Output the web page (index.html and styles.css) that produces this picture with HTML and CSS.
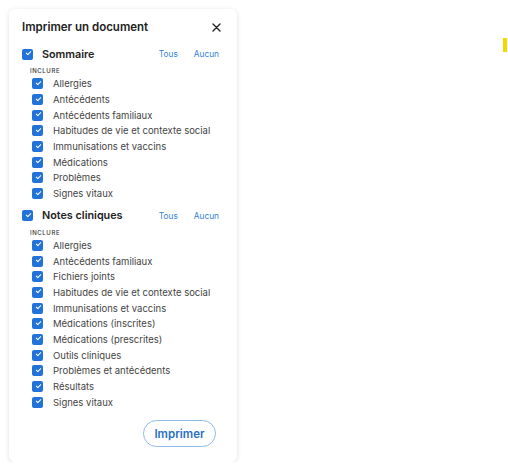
FILE: index.html
```html
<!DOCTYPE html>
<html>
<head>
  <title>Imprimer un document</title>
  <link rel="stylesheet" href="styles.css">
</head>
<body>
  <div class="page">
    <div class="card">
      <div class="card-header">
        <h1>Imprimer un document</h1>
        <button class="close" aria-label="Fermer">
          <svg width="9" height="9" viewBox="0 0 9 9"><path d="M1 1L8 8M8 1L1 8" stroke="#222" stroke-width="1.4" stroke-linecap="round"/></svg>
        </button>
      </div>

      <div class="section">
        <div class="section-head">
          <span class="box"></span>
          <span class="section-title">Sommaire</span>
          <span class="links"><a>Tous</a><a>Aucun</a></span>
        </div>
        <div class="include">Inclure</div>
        <ul class="items">
          <li><span class="box"></span>Allergies</li>
          <li><span class="box"></span>Antécédents</li>
          <li><span class="box"></span>Antécédents familiaux</li>
          <li><span class="box"></span>Habitudes de vie et contexte social</li>
          <li><span class="box"></span>Immunisations et vaccins</li>
          <li><span class="box"></span>Médications</li>
          <li><span class="box"></span>Problèmes</li>
          <li><span class="box"></span>Signes vitaux</li>
        </ul>
      </div>

      <div class="section">
        <div class="section-head">
          <span class="box"></span>
          <span class="section-title">Notes cliniques</span>
          <span class="links"><a>Tous</a><a>Aucun</a></span>
        </div>
        <div class="include">Inclure</div>
        <ul class="items">
          <li><span class="box"></span>Allergies</li>
          <li><span class="box"></span>Antécédents familiaux</li>
          <li><span class="box"></span>Fichiers joints</li>
          <li><span class="box"></span>Habitudes de vie et contexte social</li>
          <li><span class="box"></span>Immunisations et vaccins</li>
          <li><span class="box"></span>Médications (inscrites)</li>
          <li><span class="box"></span>Médications (prescrites)</li>
          <li><span class="box"></span>Outils cliniques</li>
          <li><span class="box"></span>Problèmes et antécédents</li>
          <li><span class="box"></span>Résultats</li>
          <li><span class="box"></span>Signes vitaux</li>
        </ul>
      </div>

      <div class="actions">
        <button class="print">Imprimer</button>
      </div>
    </div>

    <div class="marker"></div>
  </div>
</body>
</html>
```

FILE: styles.css
```css
body {
  margin: 0;
  font-family: Inter, "Noto Sans", sans-serif;
  background-color: #ffffff;
  color: #333333;
}

.page {
  display: flex;
  align-items: flex-start;
  padding: 9px 0 0 9px;
}

.card {
  width: 228px;
  height: 453px;
  box-sizing: border-box;
  padding: 10px 17px 15px 13px;
  background-color: #ffffff;
  border-radius: 6px;
  box-shadow: 0 1px 5px rgba(0, 0, 0, 0.13);
  display: flex;
  flex-direction: column;
}

.card-header {
  display: flex;
  align-items: center;
  justify-content: space-between;
  height: 16px;
}

h1 {
  margin: 0;
  font-size: 11.5px;
  font-weight: 600;
  color: #222222;
}

.close {
  border: none;
  background: none;
  padding: 0;
  margin-right: -1px;
  display: flex;
  cursor: pointer;
}

.section {
  margin-top: 11px;
}

.section + .section {
  margin-top: 6px;
}

.section-head {
  display: flex;
  align-items: center;
  height: 16px;
}

.section-title {
  margin-left: 9px;
  font-size: 10.8px;
  font-weight: 600;
  color: #222222;
  flex: 1;
}

.links {
  display: flex;
  gap: 16px;
  font-size: 8.3px;
  margin-right: 1px;
}

.links a {
  color: #2f7fd6;
  cursor: pointer;
}

.include {
  margin: 4px 0 0 8px;
  height: 9px;
  line-height: 9px;
  font-size: 6px;
  font-weight: 500;
  letter-spacing: 0.6px;
  text-transform: uppercase;
  color: #333333;
}

.items {
  list-style: none;
  margin: 1px 0 0 10px;
  padding: 0;
}

.items li {
  display: flex;
  align-items: center;
  height: 15.7px;
  font-size: 9.5px;
  color: #444444;
}

.items .box {
  margin-right: 10px;
}

.box {
  width: 11px;
  height: 11px;
  border-radius: 2px;
  background-color: #2273d9;
  position: relative;
  flex-shrink: 0;
}

.box::after {
  content: "";
  position: absolute;
  left: 3.5px;
  top: 2.5px;
  width: 4px;
  height: 2px;
  border-left: 1.2px solid #ffffff;
  border-bottom: 1.2px solid #ffffff;
  transform: rotate(-45deg);
}

.actions {
  display: flex;
  justify-content: flex-end;
  margin-top: auto;
  padding-right: 4px;
}

.print {
  width: 73px;
  height: 27px;
  border: 1px solid #8fb9e8;
  border-radius: 14px;
  background-color: #ffffff;
  color: #2a6fc4;
  font-family: Inter, "Noto Sans", sans-serif;
  font-size: 11.5px;
  font-weight: 600;
  cursor: pointer;
}

.marker {
  width: 4px;
  height: 14px;
  margin: 29px 0 0 266px;
  background-color: #f5d800;
}
```
